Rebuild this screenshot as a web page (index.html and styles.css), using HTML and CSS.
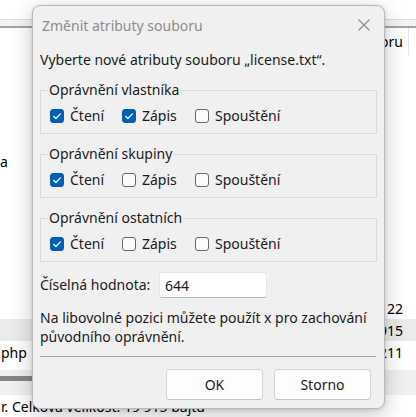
FILE: index.html
```html
<!DOCTYPE html>
<html lang="cs">
<head>
<meta charset="utf-8">
<title>Změnit atributy souboru</title>
<link rel="stylesheet" href="styles.css">
</head>
<body>
<div class="app">
  <div class="top"></div>
  <div class="edge"></div>
  <div class="header">
    <div class="hname"></div>
    <div class="hsize">souboru</div>
    <div class="hrest"></div>
  </div>
  <div class="list">
    <div class="gap1"></div>
    <div class="row">
      <div class="name">a</div>
      <div class="size"></div>
    </div>
    <div class="gap2"></div>
    <div class="row">
      <div class="name"></div>
      <div class="size">22</div>
    </div>
    <div class="row sel">
      <div class="name"></div>
      <div class="size">915</div>
    </div>
    <div class="row">
      <div class="name php">php</div>
      <div class="size">211</div>
    </div>
    <div class="hscroll"><div class="thumb"></div></div>
    <div class="status">r. Celková velikost: 19 915 bajtů</div>
  </div>
</div>

<div class="dialog">
  <div class="titlebar">
    <span class="title">Změnit atributy souboru</span>
    <svg class="close" width="12" height="12" viewBox="0 0 12 12"><path d="M0.5 0.5 L11.5 11.5 M11.5 0.5 L0.5 11.5" stroke="#8a8a8a" stroke-width="1.1" fill="none"/></svg>
  </div>
  <div class="body">
    <p class="intro">Vyberte nové atributy souboru „license.txt“.</p>

    <fieldset class="group">
      <legend>Oprávnění vlastníka</legend>
      <div class="checks">
        <div class="check"><span class="box on"><svg width="14" height="14" viewBox="0 0 14 14"><path d="M3.6 7.3 L5.9 9.5 L10.4 4.9" stroke="#fff" stroke-width="1.2" fill="none" stroke-linecap="round" stroke-linejoin="round"/></svg></span>Čtení</div>
        <div class="check"><span class="box on"><svg width="14" height="14" viewBox="0 0 14 14"><path d="M3.6 7.3 L5.9 9.5 L10.4 4.9" stroke="#fff" stroke-width="1.2" fill="none" stroke-linecap="round" stroke-linejoin="round"/></svg></span>Zápis</div>
        <div class="check"><span class="box"></span>Spouštění</div>
      </div>
    </fieldset>

    <fieldset class="group">
      <legend>Oprávnění skupiny</legend>
      <div class="checks">
        <div class="check"><span class="box on"><svg width="14" height="14" viewBox="0 0 14 14"><path d="M3.6 7.3 L5.9 9.5 L10.4 4.9" stroke="#fff" stroke-width="1.2" fill="none" stroke-linecap="round" stroke-linejoin="round"/></svg></span>Čtení</div>
        <div class="check"><span class="box"></span>Zápis</div>
        <div class="check"><span class="box"></span>Spouštění</div>
      </div>
    </fieldset>

    <fieldset class="group">
      <legend>Oprávnění ostatních</legend>
      <div class="checks">
        <div class="check"><span class="box on"><svg width="14" height="14" viewBox="0 0 14 14"><path d="M3.6 7.3 L5.9 9.5 L10.4 4.9" stroke="#fff" stroke-width="1.2" fill="none" stroke-linecap="round" stroke-linejoin="round"/></svg></span>Čtení</div>
        <div class="check"><span class="box"></span>Zápis</div>
        <div class="check"><span class="box"></span>Spouštění</div>
      </div>
    </fieldset>

    <div class="numrow">
      <label class="numlabel" for="num">Číselná hodnota:</label>
      <input class="numinput" id="num" type="text" value="644">
    </div>

    <p class="note">Na libovolné pozici můžete použít x pro zachování původního oprávnění.</p>

    <div class="sep"></div>

    <div class="buttons">
      <button class="btn">OK</button>
      <button class="btn">Storno</button>
    </div>
  </div>
</div>
</body>
</html>
```

FILE: styles.css
```css
* { box-sizing: border-box; }

html, body {
  margin: 0;
  padding: 0;
}

body {
  width: 416px;
  height: 417px;
  overflow: hidden;
  background: #ffffff;
  font-family: "Segoe UI", "Noto Sans", "Open Sans", sans-serif;
  font-size: 14px;
  color: #1b1b1b;
  position: relative;
}

/* ---------- background application ---------- */
.app {
  display: flex;
  flex-direction: column;
  height: 417px;
}

.top {
  height: 21px;
  background: #ffffff;
}

.edge {
  height: 9px;
  background: #f3f3f3;
  border-top: 1px solid #dcdcdc;
  border-bottom: 2px solid #a3a3a3;
}

.header {
  display: flex;
  height: 27px;
  align-items: stretch;
}

.hname { flex: 1; }

.hsize {
  width: 90px;
  text-align: right;
  padding-right: 5px;
  line-height: 27px;
  border-right: 1px solid #e3e3e3;
  white-space: nowrap;
  color: #000;
}

.hrest { width: 7px; }

.list {
  display: flex;
  flex-direction: column;
  flex: 1;
}

.gap1 { height: 95px; }
.gap2 { height: 125px; }

.row {
  display: flex;
  height: 22px;
  align-items: center;
  color: #000;
}

.row.sel { background: #ebebeb; }

.name {
  flex: 1;
  white-space: nowrap;
}

.name.php { padding-left: 1px; }

.size {
  margin-left: auto;
  width: 80px;
  text-align: right;
  padding-right: 13px;
  white-space: nowrap;
}

.hscroll {
  margin-top: 7px;
  height: 25px;
  background: #f0f0f0;
  padding-top: 6px;
}

.thumb {
  height: 5px;
  width: 320px;
  background: #858585;
}

.status {
  padding-top: 2px;
  line-height: 20px;
  padding-left: 1px;
  white-space: nowrap;
  color: #000;
}

/* ---------- dialog ---------- */
.dialog {
  position: absolute;
  left: 32px;
  top: 5px;
  width: 353px;
  background: #f0f0f0;
  border: 1px solid #b9b9b9;
  border-radius: 8px;
  box-shadow: 0 6px 22px rgba(0, 0, 0, 0.22), 0 1px 4px rgba(0, 0, 0, 0.12);
  display: flex;
  flex-direction: column;
  z-index: 2;
}

.titlebar {
  height: 38px;
  display: flex;
  align-items: center;
  padding-left: 9px;
}

.title {
  color: #8d8d8d;
}

.close {
  margin-left: auto;
  margin-right: 14px;
}

.body {
  padding: 0 7px 8px 7px;
  display: flex;
  flex-direction: column;
}

.intro {
  margin: 6px 0 0 0;
  line-height: 20px;
}

.group {
  margin: 10px 0 0 0;
  padding: 6px 7px 7px 7px;
  border: 1px solid #dadada;
  min-width: 0;
}

.group legend {
  padding: 0 1px;
  line-height: 20px;
}

.checks {
  display: grid;
  grid-template-columns: 72px 73px auto;
  height: 20px;
  padding-left: 2px;
}

.check {
  display: flex;
  align-items: center;
  gap: 6px;
  line-height: 20px;
  white-space: nowrap;
}

.box {
  width: 14px;
  height: 14px;
  border: 1px solid #676767;
  border-radius: 3px;
  background: #fbfbfb;
  flex: none;
  display: flex;
  align-items: center;
  justify-content: center;
}

.box.on {
  background: #005fb8;
  border-color: #005fb8;
}

.box svg { display: block; flex: none; }

.numrow {
  margin-top: 10px;
  display: grid;
  grid-template-columns: 119px 108px;
  align-items: center;
}

.numlabel { line-height: 26px; }

.numinput {
  height: 26px;
  width: 108px;
  margin: 0;
  padding: 0 5px;
  font: inherit;
  color: #1b1b1b;
  background: #ffffff;
  border: 1px solid #e6e6e6;
  border-bottom-color: #b8b8b8;
  border-radius: 3px;
  outline: none;
}

.note {
  margin: 10px 0 0 0;
  line-height: 19px;
}

.sep {
  margin: 10px 1px 0 0;
  height: 1px;
  background: #a0a0a0;
}

.buttons {
  margin-top: 12px;
  display: flex;
  justify-content: flex-end;
  gap: 11px;
  padding-right: 6px;
}

.btn {
  width: 97px;
  height: 31px;
  margin: 0;
  padding: 0;
  font: inherit;
  color: #1b1b1b;
  background: #fdfdfd;
  border: 1px solid #d5d5d5;
  border-bottom-color: #c2c2c2;
  border-radius: 4px;
}
```
